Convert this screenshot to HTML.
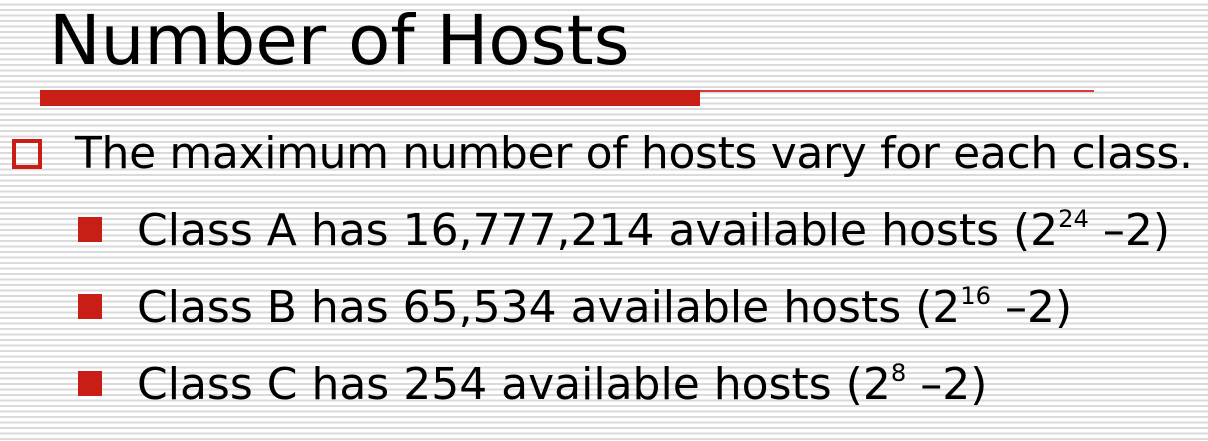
<!DOCTYPE html>
<html><head><meta charset="utf-8"><style>
html,body{margin:0;padding:0}
body{width:1208px;height:441px;overflow:hidden;position:relative;
background:repeating-linear-gradient(to bottom,#fff 0px,#fff 3.5px,#dadada 3.5px,#dadada 5.5px);
font-family:"DejaVu Sans","Liberation Sans",sans-serif;color:#000}
.t{position:absolute;white-space:nowrap;line-height:1}
sup{font-size:0.55em;vertical-align:0;position:relative;top:-0.75em}
</style></head><body>
<div class="t" style="left:49px;top:7px;font-size:69px">Number of Hosts</div>
<div style="position:absolute;left:40px;top:90px;width:660px;height:16px;background:#c81e16"></div>
<div style="position:absolute;left:700px;top:90px;width:394px;height:2px;background:#d83a3a"></div>
<div style="position:absolute;left:12px;top:139px;width:22px;height:22px;border:4px solid #c81e16"></div>
<div class="t" style="left:75px;top:132px;font-size:44px;letter-spacing:-0.35px">The maximum number of hosts vary for each class.</div>
<div style="position:absolute;left:78px;top:217px;width:24px;height:25px;background:#c81e16"></div>
<div class="t" style="left:137px;top:209px;font-size:44px">Class A has 16,777,214 available hosts (2<sup>24</sup> –2)</div>
<div style="position:absolute;left:78px;top:294px;width:24px;height:25px;background:#c81e16"></div>
<div class="t" style="left:137px;top:286px;font-size:44px">Class B has 65,534 available hosts (2<sup>16</sup> –2)</div>
<div style="position:absolute;left:78px;top:371px;width:24px;height:25px;background:#c81e16"></div>
<div class="t" style="left:137px;top:363px;font-size:44px">Class C has 254 available hosts (2<sup>8</sup> –2)</div>
</body></html>
